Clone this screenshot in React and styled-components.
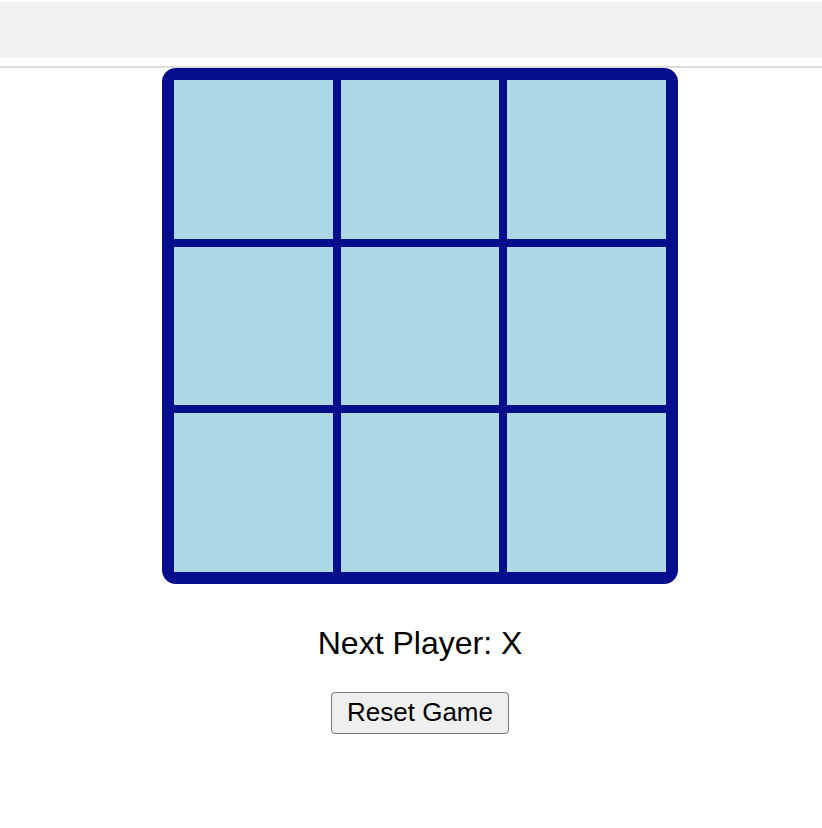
import React, { useState } from 'react';
import styled, { createGlobalStyle } from 'styled-components';

const GlobalStyle = createGlobalStyle`
  html, body {
    margin: 0;
    padding: 0;
    background: #ffffff;
    font-family: "Liberation Sans", Arial, sans-serif;
  }
`;

const TopBar = styled.div`
  margin-top: 2px;
  height: 56px;
  background: #f1f2f4;
`;

const Divider = styled.div`
  margin-top: 8px;
  height: 2px;
  background: #dcdce0;
`;

const Page = styled.main`
  display: flex;
  flex-direction: column;
  align-items: center;
  padding-left: 18px;
`;

const Board = styled.div`
  box-sizing: border-box;
  width: 516px;
  height: 516px;
  display: grid;
  grid-template-columns: repeat(3, 1fr);
  grid-template-rows: repeat(3, 1fr);
  gap: 8px;
  border: 12px solid #030e8c;
  border-radius: 14px;
  background: #030e8c;
`;

const Cell = styled.button`
  border: none;
  padding: 0;
  margin: 0;
  background: #add8e6;
  font-family: inherit;
  font-size: 80px;
  color: #030e8c;
  cursor: pointer;
`;

const Status = styled.div`
  margin-top: 41px;
  font-size: 32px;
  color: #000;
`;

const ResetButton = styled.button`
  margin-top: 30px;
  padding: 4px 15px 5px;
  font-family: inherit;
  font-size: 26px;
  color: #000;
  background: #efefef;
  border: 1px solid #767676;
  border-radius: 4px;
  cursor: pointer;
`;

export default function App() {
  const [squares, setSquares] = useState(Array(9).fill(null));
  const [xNext, setXNext] = useState(true);

  const play = (i) => {
    if (squares[i]) return;
    const next = squares.slice();
    next[i] = xNext ? 'X' : 'O';
    setSquares(next);
    setXNext(!xNext);
  };

  const reset = () => {
    setSquares(Array(9).fill(null));
    setXNext(true);
  };

  return (
    <>
      <GlobalStyle />
      <TopBar />
      <Divider />
      <Page>
        <Board>
          {squares.map((v, i) => (
            <Cell key={i} onClick={() => play(i)}>{v}</Cell>
          ))}
        </Board>
        <Status>Next Player: {xNext ? 'X' : 'O'}</Status>
        <ResetButton onClick={reset}>Reset Game</ResetButton>
      </Page>
    </>
  );
}
